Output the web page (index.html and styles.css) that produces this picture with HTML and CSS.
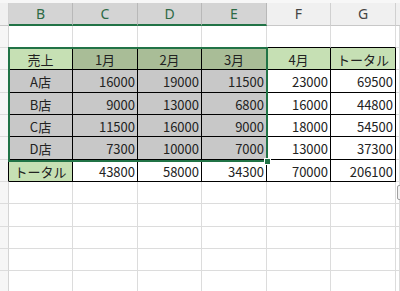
FILE: index.html
```html
<!DOCTYPE html>
<html lang="ja">
<head>
<meta charset="utf-8">
<link rel="stylesheet" href="styles.css">
</head>
<body>
<div class="topstrip"></div>
<div class="sheet">
  <div class="c hd stubhd"></div>
  <div class="c hd s">B</div>
  <div class="c hd s">C</div>
  <div class="c hd s">D</div>
  <div class="c hd s">E</div>
  <div class="c hd">F</div>
  <div class="c hd">G</div>
  <div class="c hd rest"></div>

  <div class="c stub"></div>
  <div class="c tb"></div><div class="c tb"></div><div class="c tb"></div><div class="c tb"></div><div class="c tb"></div><div class="c tb"></div>
  <div class="c"></div>

  <div class="c stub tl"></div>
  <div class="c t g m">売上</div>
  <div class="c t gs m">1月</div>
  <div class="c t gs m">2月</div>
  <div class="c t gs m">3月</div>
  <div class="c t g m">4月</div>
  <div class="c t g m">トータル</div>
  <div class="c"></div>

  <div class="c stub tl"></div>
  <div class="c t gr m">A店</div>
  <div class="c t gr n">16000</div>
  <div class="c t gr n">19000</div>
  <div class="c t gr n">11500</div>
  <div class="c t n">23000</div>
  <div class="c t n">69500</div>
  <div class="c"></div>

  <div class="c stub tl"></div>
  <div class="c t gr m">B店</div>
  <div class="c t gr n">9000</div>
  <div class="c t gr n">13000</div>
  <div class="c t gr n">6800</div>
  <div class="c t n">16000</div>
  <div class="c t n">44800</div>
  <div class="c"></div>

  <div class="c stub tl"></div>
  <div class="c t gr m">C店</div>
  <div class="c t gr n">11500</div>
  <div class="c t gr n">16000</div>
  <div class="c t gr n">9000</div>
  <div class="c t n">18000</div>
  <div class="c t n">54500</div>
  <div class="c"></div>

  <div class="c stub tl"></div>
  <div class="c t gr m">D店</div>
  <div class="c t gr n">7300</div>
  <div class="c t gr n">10000</div>
  <div class="c t gr n">7000</div>
  <div class="c t n">13000</div>
  <div class="c t n">37300</div>
  <div class="c"></div>

  <div class="c stub tl"></div>
  <div class="c t g m">トータル</div>
  <div class="c t n">43800</div>
  <div class="c t n">58000</div>
  <div class="c t n">34300</div>
  <div class="c t n">70000</div>
  <div class="c t n">206100</div>
  <div class="c"></div>

  <div class="c stub"></div><div class="c"></div><div class="c"></div><div class="c"></div><div class="c"></div><div class="c"></div><div class="c"></div><div class="c"></div>
  <div class="c stub"></div><div class="c"></div><div class="c"></div><div class="c"></div><div class="c"></div><div class="c"></div><div class="c"></div><div class="c"></div>
  <div class="c stub"></div><div class="c"></div><div class="c"></div><div class="c"></div><div class="c"></div><div class="c"></div><div class="c"></div><div class="c"></div>
  <div class="c stub"></div><div class="c"></div><div class="c"></div><div class="c"></div><div class="c"></div><div class="c"></div><div class="c"></div><div class="c"></div>
  <div class="c stub"></div><div class="c"></div><div class="c"></div><div class="c"></div><div class="c"></div><div class="c"></div><div class="c"></div><div class="c"></div>

  <div class="selection"><div class="handle"></div></div>
  <div class="quick"><div class="quick-in"></div></div>
</div>
</body>
</html>
```

FILE: styles.css
```css
html, body {
  margin: 0;
  padding: 0;
  background: #ffffff;
  overflow: hidden;
  width: 400px;
  height: 291px;
}
body {
  font-family: "Noto Sans CJK JP", "Noto Sans", sans-serif;
  font-size: 13px;
  color: #222222;
}
.topstrip {
  height: 3px;
  background: #f7f7f7;
}
.sheet {
  position: relative;
  display: grid;
  grid-template-columns: 9px 64px 65px 64px 65px 64px 65px 4px;
  grid-template-rows: 23px 22px 22px 23px 22px 22px 23px 22px 22px 23px 22px 22px 22px;
}
.c {
  box-sizing: border-box;
  border-right: 1px solid #dcdcdc;
  border-bottom: 1px solid #dcdcdc;
  display: flex;
  align-items: center;
  overflow: hidden;
  white-space: nowrap;
  line-height: 1;
}
.stub {
  background: #f6f6f6;
  border-right-color: #d4d4d4;
}
.hd {
  justify-content: center;
  background: #f0f0f0;
  font-family: "Noto Sans", sans-serif;
  font-size: 14px;
  color: #444444;
  border-right-color: #d0d0d0;
  border-bottom-color: #c8c8c8;
}
.hd.s {
  background: #d4d4d4;
  color: #2d6a45;
  border-right-color: #b8b8b8;
  border-bottom: 2px solid #217346;
}
.hd.stubhd {
  background: #f0f0f0;
}
.hd.rest {
  border-right: none;
}
.tb {
  border-bottom-color: #000000;
}
.tl {
  border-right-color: #000000;
}
.t {
  border-right-color: #000000;
  border-bottom-color: #000000;
  padding-top: 1px;
}
.g { background: #c6e0b4; }
.gs { background: #a9bd97; }
.gr { background: #c8c8c8; }
.m { justify-content: center; }
.n { justify-content: flex-end; padding-right: 2px; }
.g.m:last-child { letter-spacing: 0; }
.selection {
  position: absolute;
  left: 8px;
  top: 44px;
  width: 260px;
  height: 115px;
  box-sizing: border-box;
  border: 2px solid #217346;
  pointer-events: none;
}
.handle {
  position: absolute;
  right: -5px;
  bottom: -5px;
  width: 5px;
  height: 5px;
  background: #217346;
  border: 1px solid #ffffff;
}
.quick {
  position: absolute;
  left: 397px;
  top: 182px;
  width: 12px;
  height: 15px;
  box-sizing: border-box;
  border: 1px solid #a0a0a0;
  border-radius: 2px;
  background: #f2f2f2;
}
.quick-in {
  margin: 2px;
  height: 9px;
  border: 1px solid #c0c0c0;
  background: #ffffff;
}
```
